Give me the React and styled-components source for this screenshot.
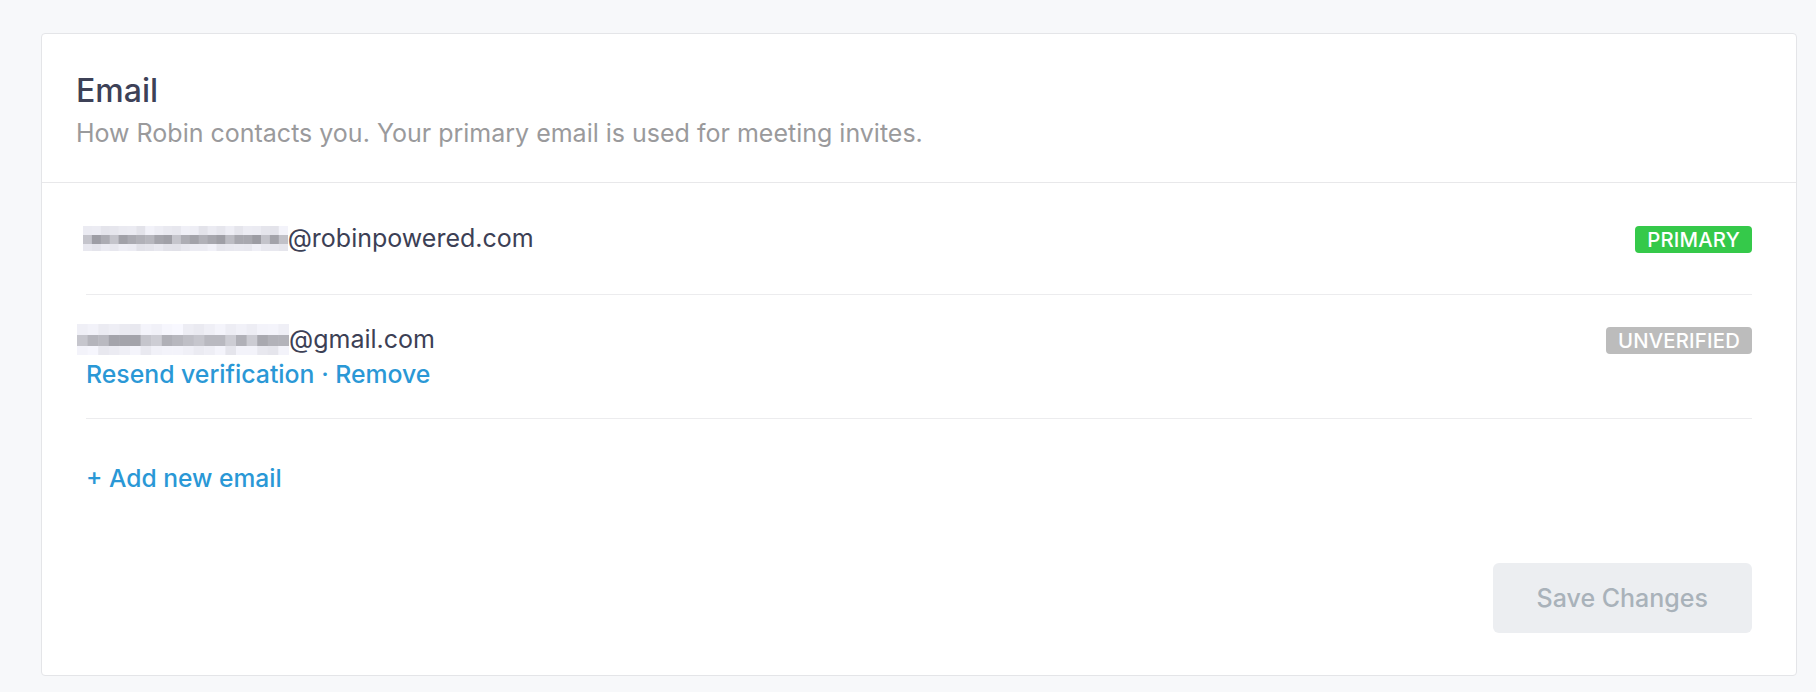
import React from "react";
import styled, { createGlobalStyle } from "styled-components";

const GlobalStyle = createGlobalStyle`
  html, body { margin: 0; padding: 0; background: #f7f8fa; }
  body { font-family: Inter, "Noto Sans", sans-serif; -webkit-font-smoothing: antialiased; }
`;

const Page = styled.div`
  padding: 33px 19px 15px 41px;
`;

const Card = styled.section`
  background: #ffffff;
  border: 1px solid #e4e5e8;
  border-radius: 4px;
  display: flex;
  flex-direction: column;
`;

const Header = styled.header`
  padding: 37px 34px 31px;
  border-bottom: 1px solid #e8e8ea;
`;

const Title = styled.h2`
  margin: 0;
  font-size: 32px;
  line-height: 40px;
  font-weight: 500;
  color: #3d4157;
`;

const Subtitle = styled.p`
  margin: 5px 0 0;
  font-size: 25px;
  line-height: 35px;
  color: #9a9a9c;
`;

const Body = styled.div`
  padding: 0 44px;
  display: flex;
  flex-direction: column;
`;

const Row = styled.div`
  display: flex;
  align-items: center;
  min-height: 58px;
  padding: ${(p) => (p.$last ? "30px 0 23px" : "26.5px 0")};
  border-bottom: ${(p) => (p.$last ? "none" : "1px solid #ececee")};
`;

const RowInner = styled.div`
  flex: 1;
  display: flex;
  justify-content: space-between;
  align-items: flex-start;
`;

const Info = styled.div`
  display: flex;
  flex-direction: column;
`;

const EmailLine = styled.div`
  display: flex;
  align-items: center;
  font-size: 25px;
  line-height: 35px;
  color: #3c4055;
`;

const Actions = styled.div`
  font-size: 24.8px;
  line-height: 35px;
  font-weight: 500;
  color: #2a98d6;
`;

const LinkButton = styled.a`
  color: #2a98d6;
  text-decoration: none;
  cursor: pointer;
  font-weight: 500;
`;

const AddLink = styled(LinkButton)`
  font-size: 24.6px;
  line-height: 35px;
`;

const Badge = styled.span`
  display: inline-flex;
  align-items: center;
  height: 27px;
  margin-top: 5px;
  padding: 0 12px;
  border-radius: 4px;
  background: ${(p) => p.$bg};
  color: #ffffff;
  font-size: 20.3px;
  font-weight: 500;
  letter-spacing: 0.2px;
`;

const Footer = styled.div`
  display: flex;
  justify-content: flex-end;
  padding: 33px 44px 42px;
`;

const SaveButton = styled.button`
  height: 70px;
  padding: 0 44px;
  border: none;
  border-radius: 6px;
  background: #eceef1;
  color: #a9b2ba;
  font-family: Inter, "Noto Sans", sans-serif;
  font-size: 25px;
  font-weight: 500;
  cursor: not-allowed;
`;

const MosaicSvg = styled.svg`
  display: block;
  flex: none;
  margin-left: ${(p) => p.$offset}px;
`;

function seeded(seed) {
  let s = seed;
  return () => {
    s = (s * 9301 + 49297) % 233280;
    return s / 233280;
  };
}

function Mosaic({ cols, cell, rows, seed, offset }) {
  const rnd = seeded(seed);
  const width = cols * cell;
  const height = rows.reduce((a, r) => a + r.h, 0);
  const rects = [];
  let y = 0;
  rows.forEach((r, ri) => {
    for (let c = 0; c < cols; c++) {
      const v = Math.round(r.min + rnd() * (r.max - r.min));
      const b = Math.min(255, v + 7);
      rects.push(
        <rect key={`${ri}-${c}`} x={c * cell} y={y} width={cell + 0.5} height={r.h} fill={`rgb(${v},${v},${b})`} />
      );
    }
    y += r.h;
  });
  return (
    <MosaicSvg $offset={offset} width={width} height={height} viewBox={`0 0 ${width} ${height}`} aria-hidden="true">
      {rects}
    </MosaicSvg>
  );
}

export default function App() {
  return (
    <>
      <GlobalStyle />
      <Page>
        <Card>
          <Header>
            <Title>Email</Title>
            <Subtitle>How Robin contacts you. Your primary email is used for meeting invites.</Subtitle>
          </Header>
          <Body>
            <Row>
              <RowInner>
                <Info>
                  <EmailLine>
                    <Mosaic
                      seed={7}
                      cols={23}
                      cell={8.9}
                      offset={-3}
                      rows={[
                        { h: 9, min: 226, max: 244 },
                        { h: 9, min: 152, max: 198 },
                        { h: 7, min: 224, max: 242 },
                      ]}
                    />
                    @robinpowered.com
                  </EmailLine>
                </Info>
                <Badge $bg="#35c94a">PRIMARY</Badge>
              </RowInner>
            </Row>
            <Row>
              <RowInner>
                <Info>
                  <EmailLine>
                    <Mosaic
                      seed={31}
                      cols={20}
                      cell={10.6}
                      offset={-9}
                      rows={[
                        { h: 11, min: 232, max: 248 },
                        { h: 11, min: 162, max: 206 },
                        { h: 9, min: 228, max: 246 },
                      ]}
                    />
                    @gmail.com
                  </EmailLine>
                  <Actions>
                    <LinkButton>Resend verification</LinkButton> · <LinkButton>Remove</LinkButton>
                  </Actions>
                </Info>
                <Badge $bg="#bcbcbc">UNVERIFIED</Badge>
              </RowInner>
            </Row>
            <Row $last>
              <AddLink>+ Add new email</AddLink>
            </Row>
          </Body>
          <Footer>
            <SaveButton disabled>Save Changes</SaveButton>
          </Footer>
        </Card>
      </Page>
    </>
  );
}
